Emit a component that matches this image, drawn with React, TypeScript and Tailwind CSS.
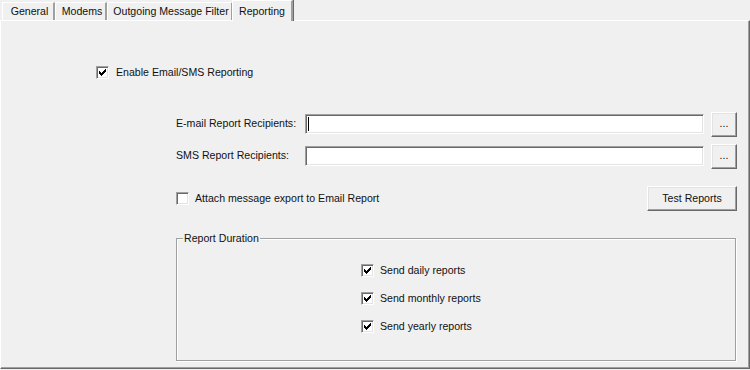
const font = { fontFamily: '"Liberation Sans", Arial, sans-serif' };

function Check({ checked }: { checked?: boolean }) {
  return (
    <span className="w-[13px] h-[13px] shrink-0 bg-white border-t border-l border-[#a0a0a0] border-b border-r border-b-white border-r-white shadow-[inset_1px_1px_#696969,inset_-1px_-1px_#e3e3e3] flex items-center justify-center">
      {checked && (
        <svg width="9" height="9" viewBox="0 0 9 9" shapeRendering="crispEdges">
          <path d="M7 1h1v1h-1zM6 2h2v1h-2zM1 3h1v1h-1zM5 3h3v1h-3zM1 4h2v1h-2zM4 4h3v1h-3zM1 5h5v1h-5zM2 6h3v1h-3zM3 7h1v1h-1z" fill="#000" />
        </svg>
      )}
    </span>
  );
}

function Btn({ children, className = "" }: { children: React.ReactNode; className?: string }) {
  return (
    <div
      className={`flex items-center justify-center bg-[#f0f0f0] border border-t-white border-l-white border-b-[#696969] border-r-[#696969] shadow-[inset_-1px_-1px_#a0a0a0,inset_1px_1px_#e3e3e3] ${className}`}
    >
      {children}
    </div>
  );
}

function Field({ caret }: { caret?: boolean }) {
  return (
    <div className="w-[400px] h-[20px] bg-white border border-t-[#a0a0a0] border-l-[#a0a0a0] border-b-white border-r-white shadow-[inset_1px_1px_#696969,inset_-1px_-1px_#e3e3e3] flex items-center pl-[2px]">
      {caret && <span className="w-px h-[14px] bg-black" />}
    </div>
  );
}

const tabs = [
  { label: "General", w: "w-[53px]" },
  { label: "Modems", w: "w-[52px]" },
  { label: "Outgoing Message Filter", w: "w-[126px]" },
];

export default function App() {
  return (
    <div className="w-[750px] h-[370px] bg-[#f0f0f0] text-[10.6px] text-[#111] flex flex-col" style={font}>
      {/* tab strip */}
      <div className="flex items-end h-[20px] pl-[2px] relative z-10">
        {tabs.map((t) => (
          <div
            key={t.label}
            className={`${t.w} h-[18px] flex items-center justify-center pl-[3px] border-t border-l border-white border-r-2 border-r-[#a0a0a0] shadow-[1px_0_#696969]`}
          >
            {t.label}
          </div>
        ))}
        <div className="w-[61px] h-[21px] -ml-[1px] -mb-[1px] bg-[#f0f0f0] flex items-start justify-center pt-[3px] border-t border-l border-white border-r-2 border-r-[#a0a0a0] shadow-[1px_0_#696969]">
          Reporting
        </div>
      </div>

      {/* panel */}
      <div className="flex-1 mb-[1px] border-t border-l border-white border-r border-b border-r-[#696969] border-b-[#696969] shadow-[inset_-1px_-1px_#a0a0a0] flex flex-col">
        <div className="mt-[45px] ml-[95px] flex items-center gap-[7px] h-[13px]">
          <Check checked />
          <span>Enable Email/SMS Reporting</span>
        </div>

        <div className="ml-[175px] mr-[12px] mt-[33px] flex flex-col">
          <div className="flex items-center h-[24px]">
            <span className="w-[129px]">E-mail Report Recipients:</span>
            <Field caret />
            <Btn className="ml-[7px] w-[26px] h-[25px]">...</Btn>
          </div>
          <div className="flex items-center h-[24px] mt-[8px]">
            <span className="w-[129px]">SMS Report Recipients:</span>
            <Field />
            <Btn className="ml-[7px] w-[26px] h-[25px]">...</Btn>
          </div>

          <div className="flex items-center justify-between h-[25px] mt-[18px]">
            <div className="flex items-center gap-[6px]">
              <Check />
              <span>Attach message export to Email Report</span>
            </div>
            <Btn className="w-[90px] h-[25px]">Test Reports</Btn>
          </div>

          <fieldset className="mt-[21px] w-[560px] h-[129px] border border-[#a0a0a0] shadow-[1px_1px_white,inset_1px_1px_white] px-0">
            <legend className="ml-[6px] px-[1px] bg-[#f0f0f0] leading-[13px]">Report Duration</legend>
            <div className="ml-[184px] mt-[19px] flex flex-col gap-[15px]">
              {["Send daily reports", "Send monthly reports", "Send yearly reports"].map((l) => (
                <div key={l} className="flex items-center gap-[6px] h-[13px]">
                  <Check checked />
                  <span>{l}</span>
                </div>
              ))}
            </div>
          </fieldset>
        </div>
      </div>
    </div>
  );
}
